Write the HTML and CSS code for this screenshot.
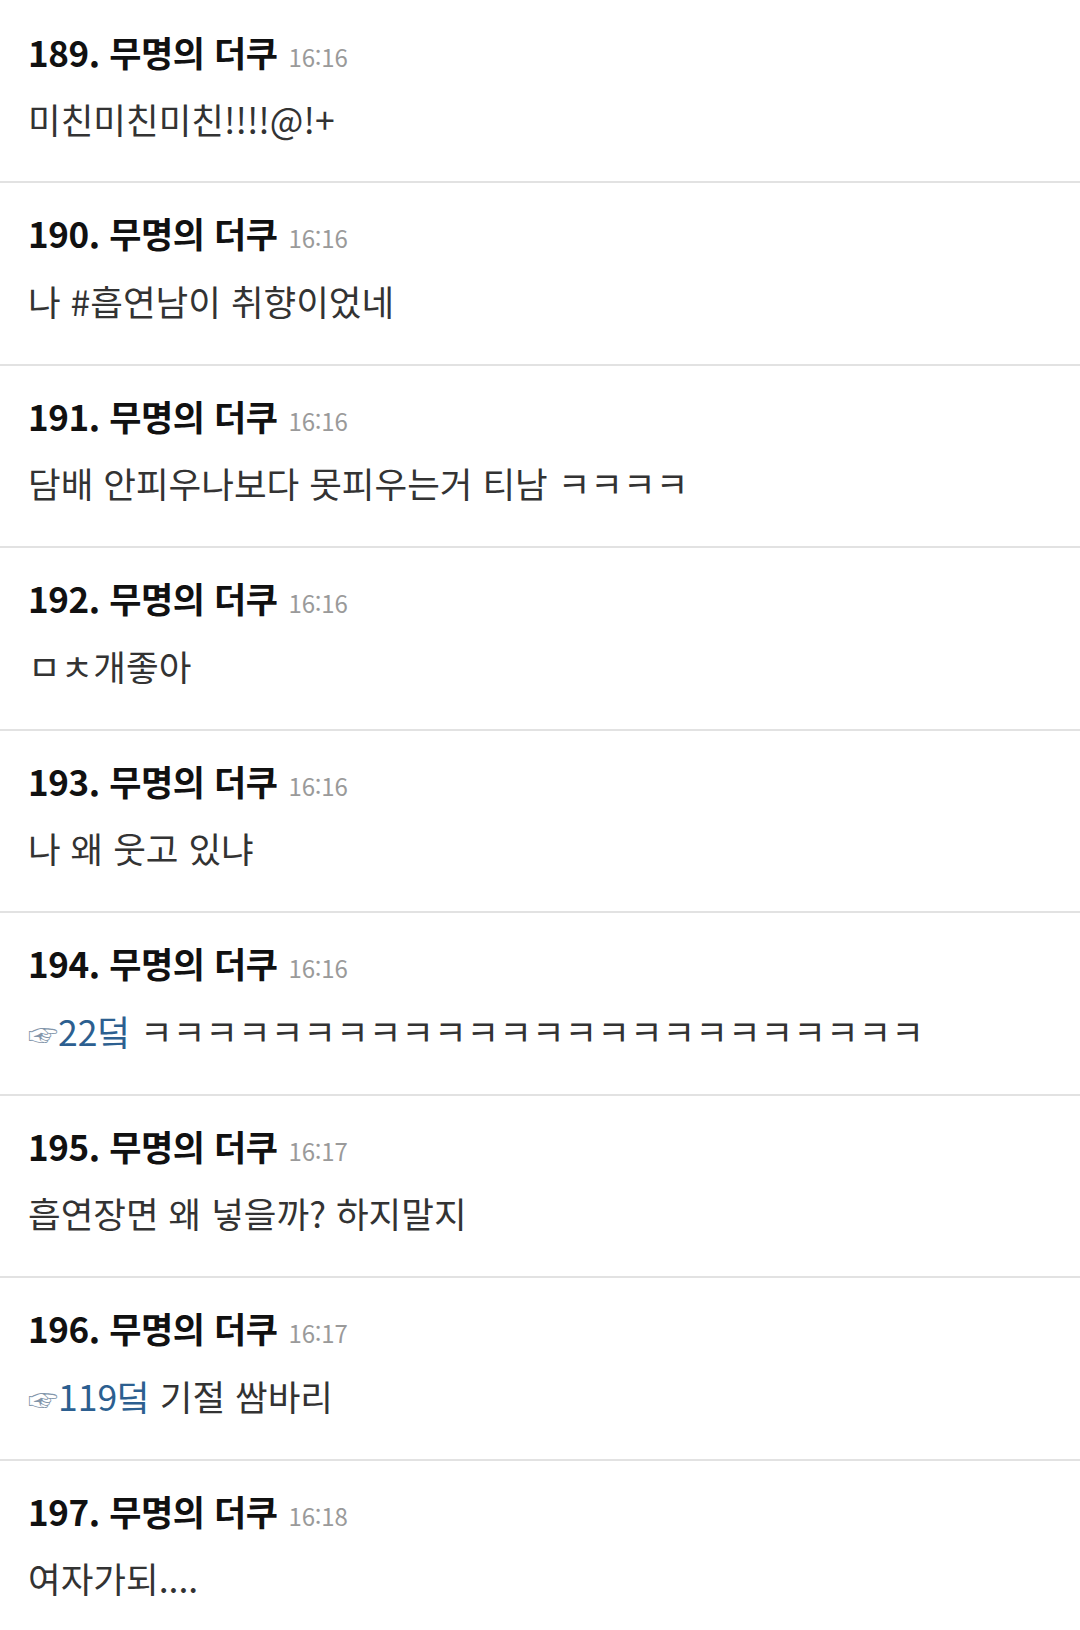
FILE: index.html
```html
<!DOCTYPE html>
<html lang="ko">
<head>
<meta charset="utf-8">
<link rel="stylesheet" href="styles.css">
</head>
<body>
<ul class="comments">
  <li class="item first">
    <div class="head"><span class="no">189. 무명의 더쿠</span><span class="time">16:16</span></div>
    <div class="body">미친미친미친!!!!@!+</div>
  </li>
  <li class="item">
    <div class="head"><span class="no">190. 무명의 더쿠</span><span class="time">16:16</span></div>
    <div class="body">나 #흡연남이 취향이었네</div>
  </li>
  <li class="item">
    <div class="head"><span class="no">191. 무명의 더쿠</span><span class="time">16:16</span></div>
    <div class="body">담배 안피우나보다 못피우는거 티남 ㅋㅋㅋㅋ</div>
  </li>
  <li class="item">
    <div class="head"><span class="no">192. 무명의 더쿠</span><span class="time">16:16</span></div>
    <div class="body">ㅁㅊ개좋아</div>
  </li>
  <li class="item">
    <div class="head"><span class="no">193. 무명의 더쿠</span><span class="time">16:16</span></div>
    <div class="body">나 왜 웃고 있냐</div>
  </li>
  <li class="item">
    <div class="head"><span class="no">194. 무명의 더쿠</span><span class="time">16:16</span></div>
    <div class="body"><span class="ref"><span class="hand">☞</span>22덬</span> ㅋㅋㅋㅋㅋㅋㅋㅋㅋㅋㅋㅋㅋㅋㅋㅋㅋㅋㅋㅋㅋㅋㅋㅋ</div>
  </li>
  <li class="item">
    <div class="head"><span class="no">195. 무명의 더쿠</span><span class="time">16:17</span></div>
    <div class="body">흡연장면 왜 넣을까? 하지말지</div>
  </li>
  <li class="item">
    <div class="head"><span class="no">196. 무명의 더쿠</span><span class="time">16:17</span></div>
    <div class="body"><span class="ref"><span class="hand">☞</span>119덬</span> 기절 쌈바리</div>
  </li>
  <li class="item">
    <div class="head"><span class="no">197. 무명의 더쿠</span><span class="time">16:18</span></div>
    <div class="body">여자가되....</div>
  </li>
</ul>
</body>
</html>
```
FILE: styles.css
```css
html, body {
  margin: 0;
  padding: 0;
  background: #ffffff;
}
body {
  font-family: "Noto Sans CJK KR", "Noto Sans", sans-serif;
  width: 1080px;
  overflow: hidden;
}
.comments {
  list-style: none;
  margin: 0;
  padding: 0;
}
.item {
  padding: 29.7px 28px 43px 28px;
  border-bottom: 2px solid #e2e2e2;
}
.item.first {
  padding-top: 31.7px;
  padding-bottom: 42px;
}
.head {
  display: flex;
  align-items: baseline;
  gap: 11px;
  height: 40px;
  line-height: 40px;
  white-space: nowrap;
}
.no {
  font-size: 35px;
  font-weight: 700;
  color: #111111;
  letter-spacing: -0.4px;
}
.time {
  font-size: 24px;
  color: #9a9a9a;
  letter-spacing: -0.2px;
}
.body {
  margin-top: 27.8px;
  height: 40px;
  line-height: 40px;
  font-size: 35.5px;
  font-weight: 400;
  color: #333333;
  white-space: nowrap;
}
.ref {
  color: #2c5f90;
}
.hand {
  font-size: 30px;
  color: #8396ab;
  margin-right: 0;
  vertical-align: 0;
}
```
